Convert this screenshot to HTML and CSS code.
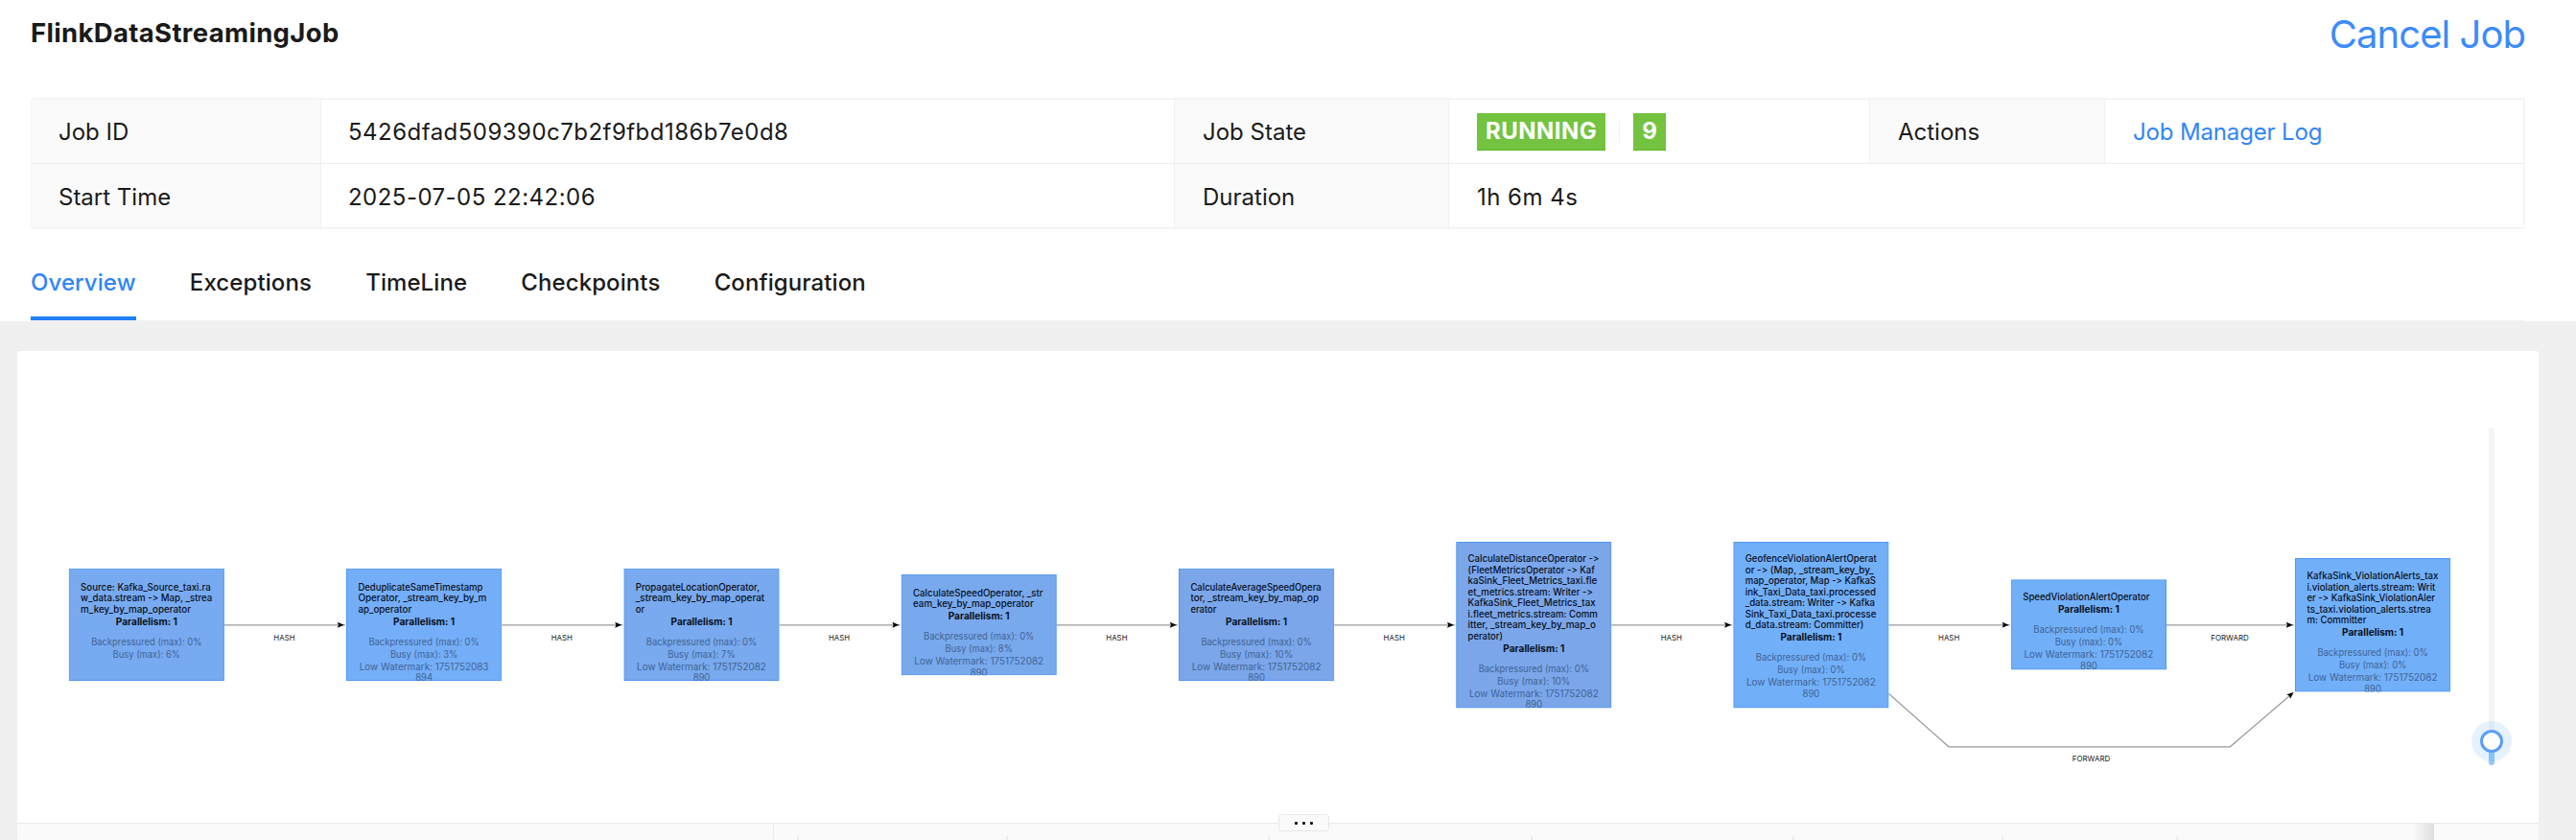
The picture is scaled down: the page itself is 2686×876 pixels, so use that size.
FILE: index.html
```html
<!DOCTYPE html>
<html lang="en">
<head>
<meta charset="utf-8">
<title>FlinkDataStreamingJob</title>
<link rel="stylesheet" href="styles.css">
</head>
<body>
<header class="job-header">
  <div class="title-row">
    <h1 class="job-name">FlinkDataStreamingJob</h1>
    <a class="cancel">Cancel Job</a>
  </div>
  <div class="descriptions">
    <div class="row row-top">
      <div class="label first">Job ID</div>
      <div class="value first">5426dfad509390c7b2f9fbd186b7e0d8</div>
      <div class="label">Job State</div>
      <div class="value state"><span class="badge">RUNNING</span><i class="divider"></i><span class="badge count">9</span></div>
      <div class="label">Actions</div>
      <div class="value"><a class="link">Job Manager Log</a></div>
    </div>
    <div class="row row-bottom">
      <div class="label first">Start Time</div>
      <div class="value first">2025-07-05 22:42:06</div>
      <div class="label">Duration</div>
      <div class="value">1h 6m 4s</div>
    </div>
  </div>
  <nav class="tabs">
    <a class="tab active">Overview</a>
    <a class="tab">Exceptions</a>
    <a class="tab">TimeLine</a>
    <a class="tab">Checkpoints</a>
    <a class="tab">Configuration</a>
  </nav>
</header>
<main class="card">
  <section class="graph">
    <svg class="dagre" id="dagre" width="2629" height="492" viewBox="18 366 2629 492"></svg>
    <div class="slider"><div class="track"></div><div class="fill"></div><div class="handle"></div></div>
  </section>
  <section class="list-head">
    <div class="cols"><i class="full"></i><i></i><i></i><i></i><i></i><i></i><i></i><i></i><i></i></div>
    <div class="fixed-col"></div>
    <div class="resizer"><b></b><b></b><b></b></div>
  </section>
</main>
<script src="graph.js"></script>
</body>
</html>
```
FILE: styles.css
```css
* { box-sizing: border-box; }
html { overflow: hidden; }
body { margin: 0; height: 876px; overflow: hidden; display: flex; flex-direction: column; background: #f0f0f0; font-family: Inter, "Liberation Sans", sans-serif; font-size: 24px; color: #1a1a1a; font-feature-settings: "calt" 0; }
.job-header { height: 335px; flex: none; padding: 0 53px 0 32px; background: #fff; display: flex; flex-direction: column; }
.title-row { height: 103px; display: flex; justify-content: space-between; align-items: flex-start; }
.job-name { margin: 17px 0 0; font-size: 27.5px; line-height: 34px; font-weight: 700; letter-spacing: 0.33px; }
.cancel { margin-top: 12px; font-size: 40px; line-height: 48px; color: #3d8bf8; letter-spacing: -0.95px; }
.descriptions { height: 138px; border: 2px solid #f5f5f5; border-left-width: 1px; border-radius: 4px; overflow: hidden; }
.row { display: grid; height: 67px; }
.row-top { grid-template-columns: 302px 890px 286px 439px 245px 1fr; border-bottom: 1px solid #ececec; }
.row-bottom { grid-template-columns: 302px 890px 286px 1fr; height: 67px; }
.label, .value { display: flex; align-items: center; padding: 0 0 0 29px; border-right: 1px solid #f0f0f0; white-space: nowrap; }
.row-bottom .label, .row-bottom .value { padding-top: 2px; }
.label.first, .value.first { padding-left: 28px; }
.value { letter-spacing: 0.47px; }
.value:last-child { border-right: 0; }
.label { background: #fafafa; }
.badge { height: 39px; line-height: 38px; padding: 0 9px; background: #73c340; border-bottom: 1px solid #52b51a; color: #fff; font-weight: 700; }
.divider { width: 1px; height: 23px; margin: 0 14px; background: #f0f0f0; }
.link { color: #3085f8; letter-spacing: -0.15px; }
.tabs { flex: 1; display: flex; gap: 56.2px; padding-top: 33px; border-bottom: 1px solid #f0f0f0; letter-spacing: 0.09px; }
.tab { height: 62px; line-height: 46px; font-weight: 500; flex: none; }
.active { color: #3085f8; border-bottom: 4px solid #2080f8; }
.card { margin: 31px 39px 0 18px; height: 510px; flex: none; background: #fff; border-radius: 3px 3px 0 0; }
.graph { height: 492px; position: relative; }
.dagre { display: block; }
.slider { position: absolute; left: 2577px; top: 80px; width: 6px; height: 352px; }
.track { width: 6px; height: 352px; border-radius: 3px; background: #f5f5f5; }
.fill { position: absolute; left: 0; bottom: 0; width: 6px; height: 26px; background: #91cbfb; border-radius: 3px; }
.handle { position: absolute; left: -9px; top: 315px; width: 24px; height: 24px; border-radius: 50%; background: #fff; border: 3px solid #5b9efa; box-shadow: 0 0 0 9px rgba(64,143,247,.13); }
.list-head { position: relative; height: 18px; border-top: 1px solid #e9e9e9; background: #fafafa; display: flex; justify-content: space-between; }
.cols { display: grid; grid-template-columns: 789px 26px 218px 273px 274px 273px 218px 182px 1fr; align-items: end; width: 2520px; background: linear-gradient(to right, transparent 2498px, #dedede); }
.cols i { height: 4px; border-right: 2px solid #ececec; }
.cols .full { height: 17px; border-right-width: 1px; }
.cols i:last-child { border: 0; }
.fixed-col { width: 109px; }
.resizer { position: absolute; left: 1315px; top: -10px; width: 53px; height: 18px; display: flex; align-items: center; justify-content: center; gap: 5px; background: #fafafa; border: 1px solid #e9e9e9; border-radius: 3px; }
.resizer b { width: 3px; height: 3px; border-radius: 1px; background: #111; }
.node-box { stroke: #4f97f2; stroke-width: 1; }
.node-name { font-size: 9.8px; font-weight: 500; fill: #07101c; }
.node-par { font-size: 9.8px; font-weight: 700; fill: #07101c; }
.node-info { font-size: 9.8px; fill: #3f6494; }
.edge { fill: none; stroke: #999; stroke-width: 1.2; }
.edge-label { font-size: 8px; fill: #222; }
```
FILE: graph.js
```js
const root = document.getElementById('dagre');
const NS = 'http://www.w3.org/2000/svg';

function add(parent, tag, attrs, text) {
  const el = document.createElementNS(NS, tag);
  for (const k in attrs) el.setAttribute(k, attrs[k]);
  if (attrs.textLength) el.setAttribute('lengthAdjust', 'spacingAndGlyphs');
  if (text) el.textContent = text;
  parent.appendChild(el);
  return el;
}

// [x, y, height, fill, busy, watermark, first baseline offset, [[line, width], ...]]
const nodes = [
  [71.7, 592.7, 117.3, '#78aaf1', 6, '', 23.2, [['Source: Kafka_Source_taxi.ra', 135.6], ['w_data.stream -> Map, _strea', 137.2], ['m_key_by_map_operator', 115]]],
  [361, 592.7, 117.3, '#75aef8', 3, '894', 23.2, [['DeduplicateSameTimestamp', 130], ['Operator, _stream_key_by_m', 134], ['ap_operator', 55.8]]],
  [650.4, 592.7, 117.3, '#79a9ee', 7, '890', 23.2, [['PropagateLocationOperator,', 129.3], ['_stream_key_by_map_operat', 134.4], ['or', 9.3]]],
  [939.6, 598.7, 105.6, '#79a9ed', 8, '890', 23.2, [['CalculateSpeedOperator, _str', 135.6], ['eam_key_by_map_operator', 125.7]]],
  [1229, 592.7, 117.3, '#7ba6ea', 10, '890', 23.2, [['CalculateAverageSpeedOpera', 136.3], ['tor, _stream_key_by_map_op', 133.7], ['erator', 27]]],
  [1518.2, 565, 173.5, '#7ba6ea', 10, '890', 21.4, [['CalculateDistanceOperator ->', 136.7], ['(FleetMetricsOperator -> Kaf', 132.3], ['kaSink_Fleet_Metrics_taxi.fle', 134.7], ['et_metrics.stream: Writer ->', 130.3], ['KafkaSink_Fleet_Metrics_tax', 133], ['i.fleet_metrics.stream: Comm', 135.3], ['itter, _stream_key_by_map_o', 133.3], ['perator)', 36.3]]],
  [1807.3, 565, 173.5, '#72aff9', 0, '890', 21.4, [['GeofenceViolationAlertOperat', 137], ['or -> (Map, _stream_key_by_', 134], ['map_operator, Map -> KafkaS', 136.3], ['ink_Taxi_Data_taxi.processed', 136.3], ['_data.stream: Writer -> Kafka', 135.3], ['Sink_Taxi_Data_taxi.processe', 136.7], ['d_data.stream: Committer)', 123.7]]],
  [2096.8, 604.3, 94.2, '#72aff9', 0, '890', 22.2, [['SpeedViolationAlertOperator', 132.2]]],
  [2393, 582, 139.6, '#72aff9', 0, '890', 22.2, [['KafkaSink_ViolationAlerts_tax', 137], ['i.violation_alerts.stream: Writ', 134], ['er -> KafkaSink_ViolationAler', 133.6], ['ts_taxi.violation_alerts.strea', 129.5], ['m: Committer', 62]]]
];
const W = 162.2;

function arrow(x, y, angle) {
  add(root, 'path', { d: 'M0 0 L-7 -3 L-5.8 0 L-7 3 Z', fill: '#000', transform: `translate(${x} ${y}) rotate(${angle})` });
}
function edgeLabel(cx, y, label) {
  const w = label === 'HASH' ? 22.2 : 39.5;
  add(root, 'text', { class: 'edge-label', x: cx - w / 2, y, textLength: w }, label);
}

for (let i = 0; i < nodes.length - 1; i++) {
  const from = nodes[i][0] + W, to = nodes[i + 1][0];
  add(root, 'path', { class: 'edge', d: `M${from} 651.8 H${to - 1}` });
  arrow(to - 2.2, 651.8, 0);
  edgeLabel((from + to) / 2 - 1, 668, i === 7 ? 'FORWARD' : 'HASH');
}
add(root, 'path', { class: 'edge', d: 'M1969.5 723.5 L2032 778.8 H2325.3 L2391 722.5' });
arrow(2391.5, 722, -41);
edgeLabel(2180.5, 794.2, 'FORWARD');

for (const [x, y, h, fill, busy, mark, first, lines] of nodes) {
  const g = add(root, 'svg', { x, y, width: W, height: h });
  add(g, 'rect', { class: 'node-box', x: 0.5, y: 0.5, width: W - 1, height: h - 1, fill });
  let b = first;
  lines.forEach(([text, w], n) => {
    add(g, 'text', { class: 'node-name', x: 12.4, y: b + n * 11.5, textLength: w }, text);
  });
  b += (lines.length - 1) * 11.5;
  const mid = (cls, dy, w, text) => {
    b += dy;
    add(g, 'text', { class: cls, x: (W - w) / 2, y: b, textLength: w }, text);
  };
  mid('node-par', 12.8, 64, 'Parallelism: 1');
  mid('node-info', 21.2, 115.3, 'Backpressured (max): 0%');
  mid('node-info', 12.9, busy === 10 ? 76 : 70.4, `Busy (max): ${busy}%`);
  if (mark) {
    mid('node-info', 12.9, 134.8, 'Low Watermark: 1751752' + (mark === '894' ? '083' : '082'));
    mid('node-info', 11.5, 17.7, mark);
  }
}
```
